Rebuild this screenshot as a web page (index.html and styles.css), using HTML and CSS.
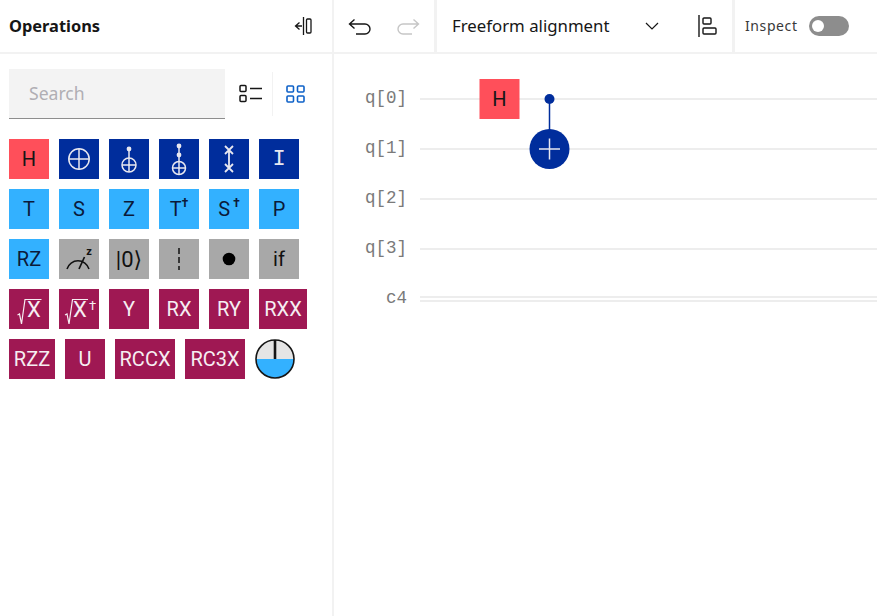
FILE: index.html
```html
<!DOCTYPE html>
<html lang="en">
<head>
    <meta charset="UTF-8">
    <meta name="viewport" content="width=device-width, initial-scale=1.0">
    <title>Circuit Composer</title>
    <link rel="stylesheet" href="styles.css">
</head>
<body>
    <div class="app">
        <aside class="sidebar">
            <header class="sidebar-head">
                <h1 class="sidebar-title">Operations</h1>
                <svg class="collapse-icon" width="20" height="20" viewBox="0 0 20 20">
                    <path d="M6.5 6.5 L2.5 10 L6.5 13.5 M2.5 10 H9 M10.5 1 V19" fill="none" stroke="#161616" stroke-width="1.3"/>
                    <rect x="13.5" y="3" width="4.5" height="14" rx="1" fill="none" stroke="#161616" stroke-width="1.3"/>
                </svg>
            </header>

            <div class="search-row">
                <input class="search" type="text" placeholder="Search">
                <div class="view-btn">
                    <svg width="24" height="20" viewBox="0 0 24 20">
                        <rect x="1" y="1.5" width="6" height="6" rx="1" fill="none" stroke="#161616" stroke-width="1.5"/>
                        <rect x="1" y="11.5" width="6" height="6" rx="1" fill="none" stroke="#161616" stroke-width="1.5"/>
                        <path d="M11 4.5 H23 M11 14.5 H23" stroke="#161616" stroke-width="1.5"/>
                    </svg>
                </div>
                <div class="view-btn view-btn-active">
                    <svg width="20" height="20" viewBox="0 0 20 20">
                        <rect x="1" y="2" width="6.5" height="6" rx="1" fill="none" stroke="#0f62c8" stroke-width="1.6"/>
                        <rect x="11.5" y="2" width="6.5" height="6" rx="1" fill="none" stroke="#0f62c8" stroke-width="1.6"/>
                        <rect x="1" y="12" width="6.5" height="6" rx="1" fill="none" stroke="#0f62c8" stroke-width="1.6"/>
                        <rect x="11.5" y="12" width="6.5" height="6" rx="1" fill="none" stroke="#0f62c8" stroke-width="1.6"/>
                    </svg>
                </div>
            </div>

            <div class="gates">
                <div class="gate gate-red">H</div>
                <div class="gate gate-blue">
                    <svg width="40" height="40" viewBox="0 0 40 40" fill="none" stroke="#e8e8f0" stroke-width="1.5">
                        <circle cx="20" cy="20" r="10.2"/>
                        <path d="M9.8 20 H30.2 M20 9.8 V30.2"/>
                    </svg>
                </div>
                <div class="gate gate-blue">
                    <svg width="40" height="40" viewBox="0 0 40 40" fill="none" stroke="#e8e8f0" stroke-width="1.5">
                        <circle cx="20" cy="10" r="2.4" fill="#e8e8f0" stroke="none"/>
                        <circle cx="20" cy="26" r="7"/>
                        <path d="M13 26 H27 M20 10 V33"/>
                    </svg>
                </div>
                <div class="gate gate-blue">
                    <svg width="40" height="40" viewBox="0 0 40 40" fill="none" stroke="#e8e8f0" stroke-width="1.5">
                        <circle cx="20" cy="7" r="2.4" fill="#e8e8f0" stroke="none"/>
                        <circle cx="20" cy="16" r="2.4" fill="#e8e8f0" stroke="none"/>
                        <circle cx="20" cy="29" r="6.5"/>
                        <path d="M13.5 29 H26.5 M20 7 V35.5"/>
                    </svg>
                </div>
                <div class="gate gate-blue">
                    <svg width="40" height="40" viewBox="0 0 40 40" fill="none" stroke="#e8e8f0" stroke-width="1.8">
                        <path d="M16 7 L24 15 M24 7 L16 15 M16 25 L24 33 M24 25 L16 33 M20 11 V29"/>
                    </svg>
                </div>
                <div class="gate gate-blue gate-mono">I</div>

                <div class="gate gate-cyan">T</div>
                <div class="gate gate-cyan">S</div>
                <div class="gate gate-cyan">Z</div>
                <div class="gate gate-cyan">T<span class="dagger">†</span></div>
                <div class="gate gate-cyan">S<span class="dagger dagger-gap">†</span></div>
                <div class="gate gate-cyan">P</div>

                <div class="gate gate-cyan">RZ</div>
                <div class="gate gate-grey">
                    <svg width="40" height="40" viewBox="0 0 40 40" fill="none" stroke="#111" stroke-width="1.5">
                        <path d="M8 30 A11.5 11.5 0 0 1 30 30"/>
                        <path d="M20 30 L25.5 18" stroke-width="1.7"/>
                        <text class="measure-z" x="30" y="16">z</text>
                    </svg>
                </div>
                <div class="gate gate-grey gate-reset">|0⟩</div>
                <div class="gate gate-grey">
                    <svg width="40" height="40" viewBox="0 0 40 40">
                        <path d="M20 9 V31" stroke="#111" stroke-width="1.5" stroke-dasharray="6 3"/>
                    </svg>
                </div>
                <div class="gate gate-grey">
                    <svg width="40" height="40" viewBox="0 0 40 40">
                        <circle cx="20" cy="20" r="6.3" fill="#000"/>
                    </svg>
                </div>
                <div class="gate gate-grey">if</div>

                <div class="gate gate-magenta">
                    <svg width="40" height="40" viewBox="0 0 40 40">
                        <path class="radical" d="M8.5 26 L10.5 25 L12.5 35 L16 10.5 H32.5"/>
                        <text class="radical-x" x="25" y="28">X</text>
                    </svg>
                </div>
                <div class="gate gate-magenta">
                    <svg width="40" height="40" viewBox="0 0 40 40">
                        <path class="radical" d="M6 26 L8 25 L10 35 L13.5 10.5 H29"/>
                        <text class="radical-x" x="21" y="28">X</text>
                        <text class="radical-dagger" x="33.5" y="21">†</text>
                    </svg>
                </div>
                <div class="gate gate-magenta">Y</div>
                <div class="gate gate-magenta">RX</div>
                <div class="gate gate-magenta">RY</div>
                <div class="gate gate-magenta gate-rxx">RXX</div>

                <div class="gate gate-magenta gate-rzz">RZZ</div>
                <div class="gate gate-magenta">U</div>
                <div class="gate gate-magenta gate-wide">RCCX</div>
                <div class="gate gate-magenta gate-wide">RC3X</div>
                <svg class="gate-bloch" width="40" height="40" viewBox="0 0 40 40">
                    <circle cx="20" cy="20" r="19" fill="#e5e5e5"/>
                    <path d="M1 20 H39 A19 19 0 0 1 1 20 Z" fill="#33b1ff"/>
                    <circle cx="20" cy="20" r="19" fill="none" stroke="#161616" stroke-width="1.6"/>
                    <path d="M20 1 V20" stroke="#161616" stroke-width="2.6"/>
                </svg>
            </div>
        </aside>

        <main class="main">
            <div class="toolbar">
                <div class="tool-group tool-history">
                    <svg width="24" height="20" viewBox="0 0 24 20" fill="none" stroke="#161616" stroke-width="1.4">
                        <path d="M6.5 3.5 L1.5 8 L6.5 12.5 M1.5 8 H17 A5 5 0 0 1 17 18 H8"/>
                    </svg>
                    <svg width="24" height="20" viewBox="0 0 24 20" fill="none" stroke="#c6c6c6" stroke-width="1.4">
                        <path d="M17.5 3.5 L22.5 8 L17.5 12.5 M22.5 8 H7 A5 5 0 0 0 7 18 H16"/>
                    </svg>
                </div>
                <div class="tool-group tool-align">
                    <span class="align-label">Freeform alignment</span>
                    <svg class="chevron" width="14" height="8" viewBox="0 0 14 8" fill="none" stroke="#161616" stroke-width="1.2">
                        <path d="M1 1 L7 7 L13 1"/>
                    </svg>
                    <svg class="align-icon" width="20" height="24" viewBox="0 0 20 24" fill="none" stroke="#161616" stroke-width="1.4">
                        <path d="M2 1 V23"/>
                        <rect x="6" y="4" width="8" height="6" rx="1"/>
                        <rect x="6" y="14" width="13" height="6" rx="1"/>
                    </svg>
                </div>
                <div class="tool-group tool-inspect">
                    <span class="inspect-label">Inspect</span>
                    <span class="toggle"><span class="toggle-knob"></span></span>
                </div>
            </div>

            <svg class="circuit" width="543" height="300" viewBox="0 0 543 300">
                <g class="wires">
                    <path d="M86 45 H543 M86 95 H543 M86 145 H543 M86 195 H543 M86 243 H543 M86 247 H543"/>
                </g>
                <g class="wire-labels">
                    <text x="73" y="49">q[0]</text>
                    <text x="73" y="99">q[1]</text>
                    <text x="73" y="149">q[2]</text>
                    <text x="73" y="199">q[3]</text>
                    <text x="73" y="249">c4</text>
                </g>
                <rect x="145.5" y="25" width="40" height="40" fill="#ff4f5a"/>
                <text class="circuit-gate-label" x="165.5" y="51.5">H</text>
                <path d="M215.5 45 V95" stroke="#002d9c" stroke-width="1.5"/>
                <circle cx="215.5" cy="45" r="5" fill="#002d9c"/>
                <circle cx="215.5" cy="95" r="20" fill="#002d9c"/>
                <path d="M205 95 H226 M215.5 84.5 V105.5" stroke="#e8e8f0" stroke-width="1.5"/>
            </svg>
        </main>
    </div>
</body>
</html>
```

FILE: styles.css
```css
:root {
    --rule: #f2f2f2;
    --ink: #161616;
    --red: #ff4f5a;
    --blue: #002d9c;
    --cyan: #33b1ff;
    --grey: #a8a8a8;
    --magenta: #9f1853;
}

html, body {
    margin: 0;
    height: 100%;
    overflow: hidden;
    background-color: #fff;
    color: var(--ink);
    font-family: "Noto Sans", Arial, sans-serif;
}

.app {
    display: flex;
    height: 616px;
}

/* left panel */
.sidebar {
    flex: 0 0 332px;
    border-right: 2px solid var(--rule);
}

.sidebar-head {
    display: flex;
    align-items: center;
    justify-content: space-between;
    box-sizing: content-box;
    height: 52px;
    padding: 0 19px 0 9px;
    border-bottom: 2px solid var(--rule);
}

.sidebar-title {
    margin: 0 0 2px;
    font-size: 16.4px;
    font-weight: 700;
}

.search-row {
    display: flex;
    align-items: center;
    height: 50px;
    margin: 15px 0 20px 9px;
}

.search {
    box-sizing: border-box;
    width: 216px;
    height: 50px;
    padding: 0 20px 2px;
    background-color: #f3f3f3;
    border: none;
    border-bottom: 1px solid #8d8d8d;
    border-radius: 0;
    outline: none;
    font-family: "Noto Sans", Arial, sans-serif;
    font-size: 17.6px;
}

.search::placeholder {
    color: #b0aeb4;
    opacity: 1;
}

.view-btn {
    display: flex;
    align-items: center;
    padding: 0 9px 0 14px;
    height: 44px;
    border-right: 1px solid var(--rule);
}

.view-btn svg {
    display: block;
}

.view-btn-active {
    padding: 0 0 0 13px;
    border-right: none;
}

/* gate palette */
.gates {
    display: flex;
    flex-wrap: wrap;
    gap: 10px;
    width: 310px;
    margin-left: 9px;
}

.gate {
    display: flex;
    align-items: center;
    justify-content: center;
    box-sizing: border-box;
    width: 40px;
    height: 40px;
    font-family: Roboto, Arial, sans-serif;
    font-size: 20px;
}

.gate svg {
    display: block;
}

.gate-red { background-color: var(--red); color: var(--ink); }
.gate-blue { background-color: var(--blue); color: #e8e8f0; }
.gate-cyan { background-color: var(--cyan); color: #0b1a3a; }
.gate-grey { background-color: var(--grey); color: #111; }
.gate-magenta { background-color: var(--magenta); color: #f6eef2; }

.gate-mono { font-family: "Liberation Mono", monospace; font-size: 22px; }
.gate-reset { font-family: Roboto, "DejaVu Sans", sans-serif; font-size: 22px; }

.gate-rxx { width: 48px; margin-right: -8px; }
.gate-rzz { width: 46px; }
.gate-wide { width: 60px; }

.dagger {
    align-self: flex-start;
    margin-top: 7px;
    font-size: 12px;
    font-weight: 700;
}

.dagger-gap {
    margin-left: 3px;
}

.measure-z {
    text-anchor: middle;
    font-family: Roboto, Arial, sans-serif;
    font-size: 11px;
    font-weight: 700;
    fill: #111;
    stroke: none;
}

.radical {
    fill: none;
    stroke: #f6eef2;
    stroke-width: 1.2;
}

.radical-x {
    text-anchor: middle;
    font-family: Roboto, Arial, sans-serif;
    font-size: 22px;
    fill: #f6eef2;
}

.radical-dagger {
    text-anchor: middle;
    font-family: Roboto, Arial, sans-serif;
    font-size: 13px;
    fill: #f6eef2;
}

/* toolbar */
.main {
    flex: 1;
    min-width: 0;
}

.toolbar {
    display: flex;
    height: 52px;
    border-bottom: 2px solid var(--rule);
}

.tool-group {
    display: flex;
    align-items: center;
    box-sizing: border-box;
    height: 52px;
    border-right: 3px solid var(--rule);
}

.tool-history {
    gap: 24px;
    width: 103px;
    padding-left: 14px;
}

.tool-align {
    width: 298px;
    padding-left: 15px;
}

.align-label {
    width: 193px;
    margin-bottom: 2px;
    font-size: 16.8px;
}

.chevron {
    margin-right: 38px;
}

.tool-inspect {
    flex: 1;
    gap: 11px;
    padding-left: 10px;
    border-right: none;
}

.inspect-label {
    margin-bottom: 2px;
    font-size: 14px;
    letter-spacing: 0.6px;
    color: #393939;
}

.toggle {
    display: flex;
    align-items: center;
    box-sizing: border-box;
    width: 40px;
    height: 20px;
    padding: 0 3px;
    background-color: #8d8d8d;
    border-radius: 10px;
}

.toggle-knob {
    width: 12px;
    height: 12px;
    background-color: #fff;
    border-radius: 50%;
}

/* circuit */
.circuit {
    display: block;
}

.wires path {
    fill: none;
    stroke: #e8e8e8;
    stroke-width: 1.6;
}

.wire-labels text {
    text-anchor: end;
    font-family: "Liberation Mono", monospace;
    font-size: 17.5px;
    fill: #7a7a7a;
}

.circuit-gate-label {
    text-anchor: middle;
    font-family: Roboto, Arial, sans-serif;
    font-size: 20px;
    fill: #161616;
}
```
